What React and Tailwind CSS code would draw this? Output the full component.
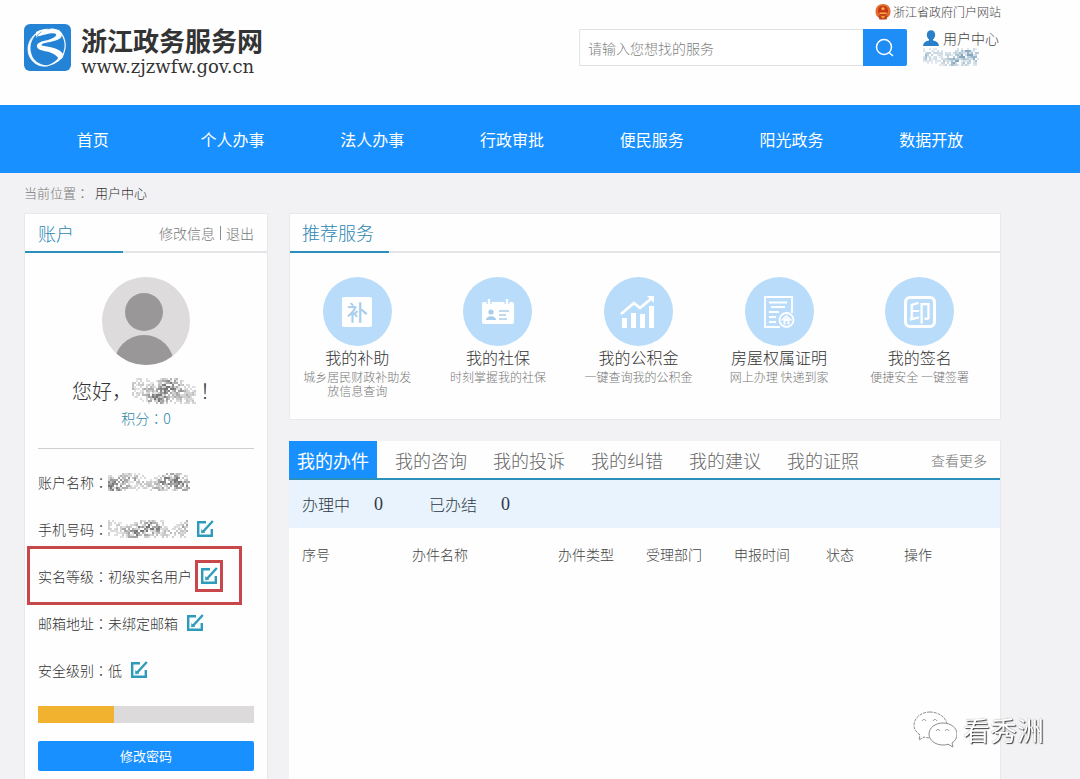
import React, { useState } from 'react';

const NAV_ITEMS = ['首页', '个人办事', '法人办事', '行政审批', '便民服务', '阳光政务', '数据开放'];

const TABS = ['我的办件', '我的咨询', '我的投诉', '我的纠错', '我的建议', '我的证照'];

const COLUMNS = [
    { label: '序号', width: 'w-[110px]' },
    { label: '办件名称', width: 'w-[146px]' },
    { label: '办件类型', width: 'w-[88px]' },
    { label: '受理部门', width: 'w-[88px]' },
    { label: '申报时间', width: 'w-[92px]' },
    { label: '状态', width: 'w-[78px]' },
    { label: '操作', width: '' }
];

// Pixelated patch that hides personal data
function Mask({ width, height, seed, color = '#4a4a4a', className = '' }) {
    const cells = [];
    let n = seed * 7919;
    const next = () => {
        n = (n * 16807) % 2147483647;
        return n / 2147483647;
    };
    for (let x = 0; x < width; x += 2) {
        const middle = height / 2 + Math.sin(x / 6 + seed) * height * 0.18;
        const density = 0.55 + 0.25 * Math.sin(x / 9 + seed);
        for (let y = 0; y < height; y += 2) {
            const edge = 1 - Math.abs(y - middle) / (height * 0.55);
            const v = next() * density * (0.4 + edge);
            if (v > 0.14) cells.push(<rect key={`${x}-${y}`} x={x} y={y} width="2" height="2" fill={color} opacity={Math.min(0.75, v)} />);
        }
    }
    return (
        <svg width={width} height={height} className={`shrink-0 ${className}`} role="img" aria-label="已隐藏">
            {cells}
        </svg>
    );
}

// Full-width colon centred in its cell
const Colon = () => <span className="font-['Noto_Sans_CJK_TC',sans-serif]">：</span>;

const Logo = () => (
    <svg width="47" height="47" viewBox="0 0 47 47" className="shrink-0" aria-hidden="true">
        <rect width="47" height="47" rx="6" fill="#2583d6" />
        <path d="M16 7C6 12 2 22 5 31c3 8 10 12 18 11-8-1-14-5-16-12C4 21 8 12 16 7z" fill="#fff" stroke="#fff" strokeWidth="0.8" />
        <path d="M12 14C17 6 26 2 34 6c5 3 5 7 1 9-5 3-12 3-17 5-1 1 0 2 2 2 8 1 16 3 19 8 1 3-1 5-4 6-1-4-5-6-10-8-5-1-11-2-12-5-1-4 5-6 11-7 6-2 9-4 8-6-3-2-12 1-20 3 3-5 9-8 15-8-6-1-11 1-15 3z" fill="#fff" />
        <path d="M34 6c6 5 9 14 6 22M40 28c-1 6-8 12-17 14 6-2 10-5 12-8" fill="none" stroke="#fff" strokeWidth="1.2" />
    </svg>
);

const Emblem = () => (
    <svg width="16" height="16" viewBox="0 0 16 16" aria-hidden="true">
        <path d="M8 0c4.500 0 7.500 3 7.500 7.500 0 3-1 4.500-2.500 5.500H3C1.500 12 .5 10.500.5 7.500.5 3 3.500 0 8 0z" fill="#e0702c" />
        <circle cx="8" cy="6.800" r="5" fill="#c9321c" />
        <path d="M8 2.300l.7 1.500 1.600.1-1.200 1 .4 1.600L8 5.700l-1.500.8.4-1.600-1.200-1 1.600-.1z" fill="#f6b73c" />
        <path d="M4.500 8.500h7V10h-7z" fill="#f6b73c" />
        <path d="M3 11.500h10l-1.500 4h-7z" fill="#c2401c" />
        <path d="M6 12h4l-1 2H7z" fill="#eda32c" />
    </svg>
);

const EditIcon = () => (
    <svg width="18" height="18" viewBox="0 0 18 18" fill="none" stroke="#2c9cba" strokeWidth="2.4" aria-hidden="true">
        <path d="M10 2.200H2.200v13.600h13.600V9" />
        <path d="M16.800 1L7 11.800" />
        <path d="M5.600 9.600l3.400 2.800-3.600.6z" fill="#2c9cba" strokeWidth="0.5" />
    </svg>
);

const SubsidyIcon = () => (
    <span className="flex h-[30px] w-[30px] items-center justify-center rounded-xs bg-white text-[21px] leading-none font-medium text-[#a9cdec]" aria-hidden="true">补</span>
);

const CardIcon = () => (
    <svg width="32" height="26" viewBox="0 0 32 26" aria-hidden="true">
        <rect x="0" y="3" width="32" height="22" rx="2" fill="#fff" />
        <path d="M7 1v4M25 1v4" stroke="#b9dcfb" strokeWidth="5" />
        <path d="M7 0v5M25 0v5" stroke="#fff" strokeWidth="2.4" />
        <circle cx="9" cy="13" r="2.6" fill="#a9cdec" />
        <path d="M4 21c0-5 10-5 10 0z" fill="#a9cdec" />
        <path d="M17 12h10M17 16h7M17 20h8" stroke="#a9cdec" strokeWidth="1.4" />
    </svg>
);

const ChartIcon = () => (
    <svg width="36" height="34" viewBox="0 0 36 34" aria-hidden="true">
        <path d="M2 23h5v10H2zM11 18h5v15h-5zM20 19h5v14h-5zM29 11h5v22h-5z" fill="#fff" />
        <path d="M1 19L14 8l6 5L32 3" fill="none" stroke="#fff" strokeWidth="2.8" />
        <path d="M27 1h7v7z" fill="#fff" />
    </svg>
);

const HouseIcon = () => (
    <svg width="32" height="34" viewBox="0 0 32 34" fill="none" stroke="#fff" strokeWidth="1.8" aria-hidden="true">
        <path d="M17 32H2V2h27v16" />
        <path d="M6 7.500h18M8 12h14M6 17h10M6 22h7M6 27h7" />
        <circle cx="23.500" cy="25" r="7" />
        <path d="M18.500 25.500l5-4.500 5 4.500" strokeWidth="1.6" />
        <path d="M20.500 25l3-2.500 3 2.500v4.500h-2V26h-2v3.500h-2z" fill="#fff" stroke="none" />
    </svg>
);

const SealIcon = () => (
    <span className="flex h-8 w-8 items-center justify-center rounded-md border-3 border-white text-[23px] leading-none font-medium text-white" aria-hidden="true">印</span>
);

const SERVICES = [
    { title: '我的补助', desc: '城乡居民财政补助发放信息查询', Icon: SubsidyIcon },
    { title: '我的社保', desc: '时刻掌握我的社保', Icon: CardIcon },
    { title: '我的公积金', desc: '一键查询我的公积金', Icon: ChartIcon },
    { title: '房屋权属证明', desc: '网上办理 快递到家', Icon: HouseIcon },
    { title: '我的签名', desc: '便捷安全 一键签署', Icon: SealIcon }
];

const InfoRow = ({ label, children, editable = true, marked = false }) => (
    <div className="relative flex h-[47px] items-center text-sm text-[#333]">
        <dt>{label}<Colon /></dt>
        <dd className="flex items-center">
            {children}
            {editable && (
                <button type="button" className="relative ml-2" aria-label={`修改${label}`}>
                    <EditIcon />
                    {marked && <span className="absolute -inset-x-[5px] -inset-y-[7px] border-3 border-[#c8474a]"></span>}
                </button>
            )}
        </dd>
        {marked && <span className="pointer-events-none absolute -inset-y-[6px] right-3 -left-[11px] border-3 border-[#c8474a]"></span>}
    </div>
);

const Header = () => (
    <header className="flex h-[105px] justify-between bg-[#fefefe] pr-[79px] pl-6">
        <a href="#" className="flex items-start gap-[10px] pt-6">
            <Logo />
            <span className="flex flex-col text-[#333]">
                <span className="text-[26px] leading-8 font-bold">浙江政务服务网</span>
                <span className="mt-[3px] font-['DejaVu_Serif',serif] text-lg leading-4">www.zjzwfw.gov.cn</span>
            </span>
        </a>
        <div className="flex flex-col pt-1">
            <a href="#" className="flex h-4 items-center justify-end gap-[2px] text-xs text-[#444]">
                <Emblem />
                浙江省政府门户网站
            </a>
            <div className="mt-[9px] flex gap-4">
                <form className="flex h-[37px]" onSubmit={(e) => e.preventDefault()}>
                    <input
                        type="search"
                        aria-label="搜索服务"
                        placeholder="请输入您想找的服务"
                        className="w-[284px] rounded-l-xs border border-r-0 border-[#e2e2e4] bg-white px-2 text-sm outline-none placeholder:text-[#808080]"
                    />
                    <button type="submit" aria-label="搜索" className="flex w-11 items-center justify-center rounded-r-xs bg-[#1e8df5]">
                        <svg width="20" height="20" viewBox="0 0 20 20" fill="none" stroke="#fff" strokeWidth="1.5" aria-hidden="true">
                            <circle cx="9" cy="9" r="7.5" />
                            <path d="M14 14.500l4 3.500" />
                        </svg>
                    </button>
                </form>
                <div className="flex w-[78px] flex-col">
                    <a href="#" className="flex h-[18px] items-center gap-1 text-sm text-[#444]">
                        <svg width="16" height="16" viewBox="0 0 16 16" fill="#2a80c8" aria-hidden="true">
                            <ellipse cx="8" cy="5" rx="4.2" ry="4.8" />
                            <path d="M6 8h4v2.500c3 .6 5.500 1.500 6 5.500H0c.5-4 3-4.900 6-5.500z" />
                        </svg>
                        用户中心
                    </a>
                    <Mask width={56} height={18} seed={41} color="#5e8ba8" className="mt-[1px]" />
                </div>
            </div>
        </div>
    </header>
);

const Account = () => (
    <aside className="w-[244px] shrink-0 border border-[#e9e9eb] bg-[#fefefe] pb-2">
        <div className="flex h-[39px] items-stretch justify-between border-b-2 border-[#e4e4e6]">
            <h2 className="-mb-[2px] w-[98px] border-b-2 border-[#2b91bb] pl-[13px] text-lg leading-[39px] text-[#2b86b3]">账户</h2>
            <div className="flex items-center pr-[13px] text-sm text-[#777]">
                <a href="#">修改信息</a>
                <span className="mx-[5px] h-[14px] w-px bg-[#8c8c8c]"></span>
                <a href="#">退出</a>
            </div>
        </div>
        <div className="px-[13px]">
            <svg width="88" height="88" viewBox="0 0 88 88" className="mx-auto mt-6" role="img" aria-label="头像">
                <clipPath id="avatar"><circle cx="44" cy="44" r="44" /></clipPath>
                <circle cx="44" cy="44" r="44" fill="#dddbdc" />
                <circle cx="42" cy="35" r="19" fill="#999798" />
                <circle cx="42" cy="88" r="30" fill="#999798" clipPath="url(#avatar)" />
            </svg>
            <p className="mt-3 flex h-7 items-center justify-center text-xl text-[#333]">
                您好，
                <Mask width={64} height={26} seed={17} />
                <span className="pl-1">！</span>
            </p>
            <p className="mt-[2px] border-b border-[#cfcfcf] pb-[19px] text-center text-sm leading-[22px] text-[#2b86a8]">积分<Colon />0</p>
            <dl className="mt-[9px]">
                <InfoRow label="账户名称" editable={false}><Mask width={82} height={18} seed={7} /></InfoRow>
                <InfoRow label="手机号码"><Mask width={80} height={18} seed={29} /></InfoRow>
                <InfoRow label="实名等级" marked>初级实名用户</InfoRow>
                <InfoRow label="邮箱地址">未绑定邮箱</InfoRow>
                <InfoRow label="安全级别">低</InfoRow>
            </dl>
            <div className="mt-[13px] h-[17px] bg-[#dcdadb]" role="img" aria-label="安全级别 低">
                <div className="h-full bg-[#f1b32f]" style={{ width: '35%' }}></div>
            </div>
            <button type="button" className="mt-[18px] h-[30px] w-full rounded-xs bg-[#1890ff] text-[13px] font-normal text-white">修改密码</button>
        </div>
    </aside>
);

const Services = () => (
    <section className="border border-[#e9e9eb] bg-[#fefefe] pb-[17px]">
        <div className="h-[39px] border-b-2 border-[#e4e4e6]">
            <h2 className="w-[99px] border-b-2 border-[#2b91bb] pl-3 text-lg leading-[37px] text-[#2b86b3]">推荐服务</h2>
        </div>
        <ul className="-ml-[3px] grid grid-cols-5 pt-6 pr-[10px]">
            {SERVICES.map(({ title, desc, Icon }) => (
                <li key={title}>
                    <a href="#" className="flex flex-col items-center text-center">
                        <span className="flex h-[69px] w-[69px] items-center justify-center rounded-full bg-[#b9dcfb]"><Icon /></span>
                        <span className="text-base leading-[22px] text-[#333]">{title}</span>
                        <span className="mt-[2px] h-8 w-[110px] text-xs leading-[14px] text-[#777]">{desc}</span>
                    </a>
                </li>
            ))}
        </ul>
    </section>
);

function Records() {
    const [active, setActive] = useState(TABS[0]);

    return (
        <section className="flex-1 border-r border-[#e9e9eb] bg-[#fefefe]">
            <div className="flex h-[39px] items-stretch border-b-2 border-[#2b91bb]">
                <div className="flex" role="tablist">
                    {TABS.map((tab) => (
                        <button
                            key={tab}
                            type="button"
                            role="tab"
                            aria-selected={active === tab}
                            onClick={() => setActive(tab)}
                            className={active === tab ? 'mr-[5px] bg-[#1890ff] px-2 text-lg font-normal text-white' : 'px-[13px] text-lg text-[#666]'}
                        >
                            {tab}
                        </button>
                    ))}
                </div>
                <a href="#" className="mr-[13px] ml-auto self-center text-sm text-[#777]">查看更多</a>
            </div>
            <div className="flex h-12 items-center bg-[#e8f3fd] px-[13px] text-base text-[#2f3844]">
                <span>办理中</span>
                <span className="ml-6 font-['Liberation_Serif',serif] text-lg">0</span>
                <span className="ml-[46px]">已办结</span>
                <span className="ml-6 font-['Liberation_Serif',serif] text-lg">0</span>
            </div>
            <table className="w-full table-fixed text-sm text-[#444]">
                <thead>
                    <tr className="h-[52px]">
                        {COLUMNS.map((col) => (
                            <th key={col.label} scope="col" className={`pl-[13px] text-left font-light ${col.width}`}>{col.label}</th>
                        ))}
                    </tr>
                </thead>
            </table>
        </section>
    );
}

const Watermark = () => (
    <div className="pointer-events-none fixed right-9 bottom-[30px] flex items-center gap-[6px]">
        <svg width="44" height="38" viewBox="0 0 44 38" fill="#fff" stroke="#8c8c8c" strokeWidth="1" aria-hidden="true">
            <path d="M17 1C8 1 1 7 1 14c0 4 2 7 6 10l-1 5 5-3c2 .6 4 1 7 1 9 0 16-6 16-13S26 1 17 1z" strokeDasharray="3 1" />
            <path d="M30 12c-8 0-14 5-14 11s6 11 14 11c2 0 4-.3 5-.8l5 2.800-1-4c3-2 5-5 5-9 0-6-6-11-14-11z" />
            <path d="M9 10c1-2 3-2 4 0M20 10c1-2 3-2 4 0M23 20c1-2 3-2 4 0M32 20c1-2 3-2 4 0" fill="none" />
        </svg>
        <span className="text-[27px] leading-9 font-normal text-white [text-shadow:1px_1px_1px_#444,0_0_1px_#888]">看秀洲</span>
    </div>
);

export default function App() {
    return (
        <div className="flex min-h-screen flex-col bg-[#f2f1f3] font-['Noto_Sans_CJK_SC',sans-serif] font-light">
            <Header />
            <nav className="bg-[#1890ff] pr-[79px] pl-[23px]">
                <ul className="grid grid-cols-7">
                    {NAV_ITEMS.map((item) => (
                        <li key={item}>
                            <a href="#" className="block text-center text-base leading-[68px] font-normal text-white">{item}</a>
                        </li>
                    ))}
                </ul>
            </nav>
            <p className="pt-[10px] pl-6 text-[13px] leading-5 text-[#333]">
                <span className="mr-[6px] text-[#777]">当前位置<Colon /></span>
                用户中心
            </p>
            <main className="flex flex-1 gap-[21px] pt-[10px] pr-[79px] pl-6">
                <Account />
                <div className="flex min-w-0 flex-1 flex-col gap-[21px]">
                    <Services />
                    <Records />
                </div>
            </main>
            <Watermark />
        </div>
    );
}
